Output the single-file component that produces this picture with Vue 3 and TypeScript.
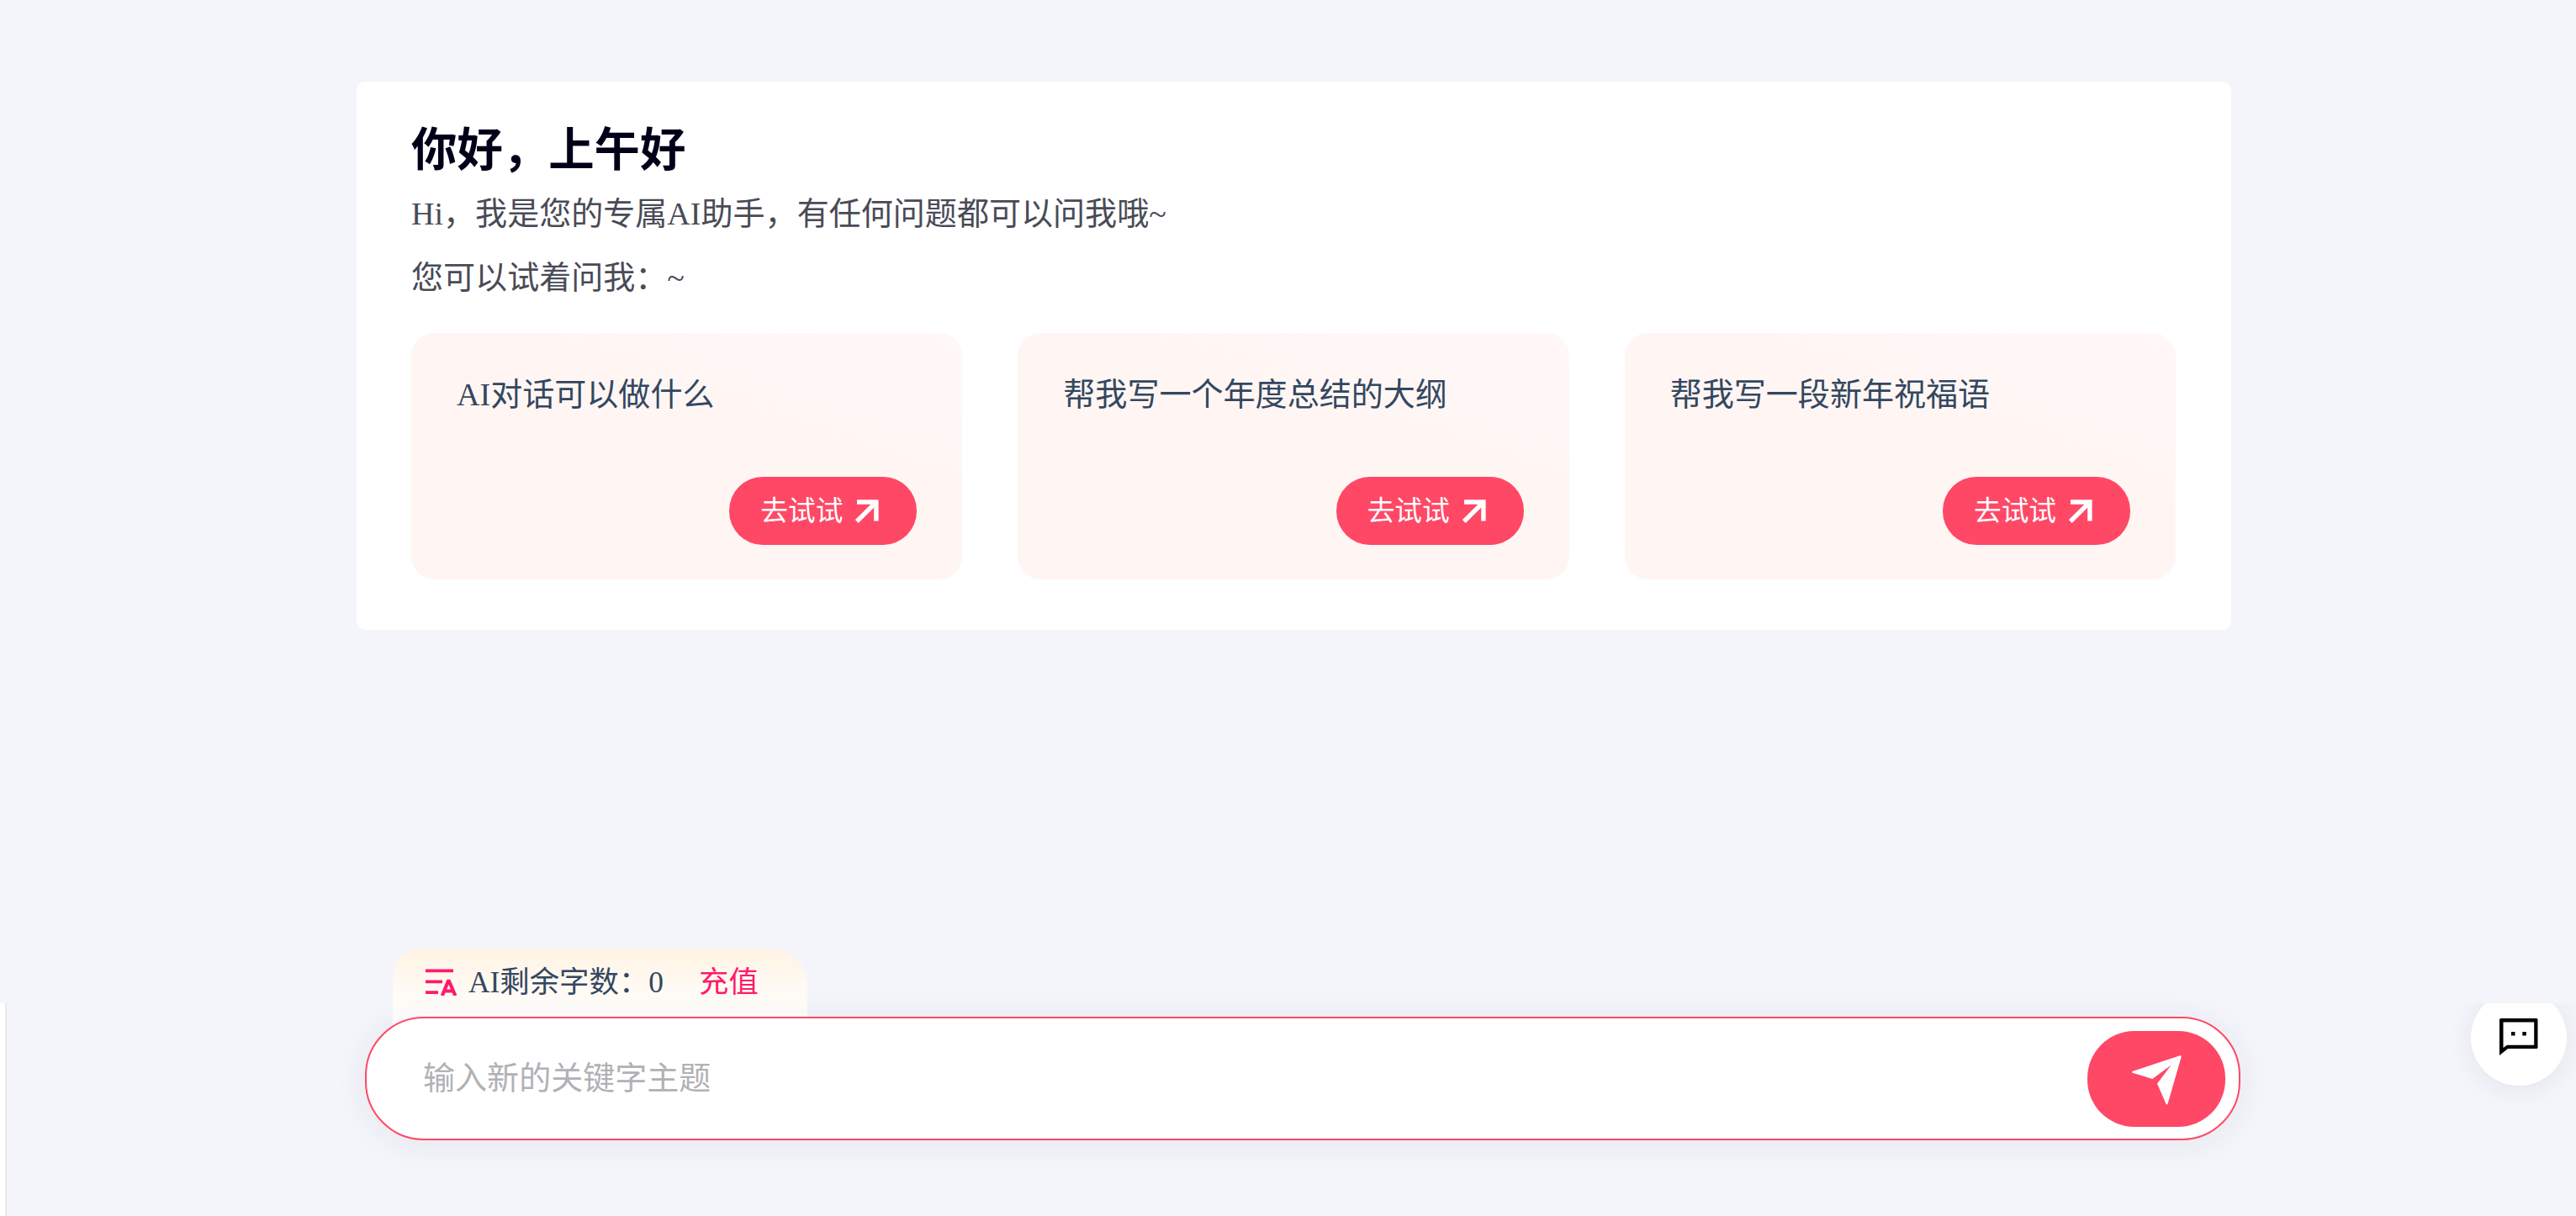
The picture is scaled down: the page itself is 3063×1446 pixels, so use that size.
<script setup lang="ts">
import { ref } from 'vue'

const keyword = ref<string>('')
const remaining = ref<number>(0)
const prompts: string[] = ['AI对话可以做什么', '帮我写一个年度总结的大纲', '帮我写一段新年祝福语']

function usePrompt(text: string): void {
  keyword.value = text
}
</script>

<template>
  <div class="page">
    <section class="welcome">
      <h1 class="title">你好，上午好</h1>
      <p class="line">Hi，我是您的专属AI助手，有任何问题都可以问我哦~</p>
      <p class="line">您可以试着问我：~</p>
      <div class="cards">
        <article v-for="text in prompts" :key="text" class="card">
          <p class="card-text">{{ text }}</p>
          <button class="try" type="button" @click="usePrompt(text)">
            <span>去试试</span>
            <svg class="arrow" viewBox="0 0 28 28">
              <path d="M2 3H24.900V25.500M24 4L1.800 26" fill="none" stroke="#fff" stroke-width="5.400" />
            </svg>
          </button>
        </article>
      </div>
    </section>

    <footer class="composer">
      <div class="quota">
        <svg class="quota-icon" viewBox="0 0 38 32">
          <g fill="none" stroke="#ff1a6c" stroke-width="3.800">
            <path d="M0 2.400H33M0 15.400H20M0 28.200H15" />
            <path d="M19.800 32L27.400 13.500L35.400 32M22.500 26.500H33" stroke-linejoin="bevel" stroke-width="4.200" />
          </g>
        </svg>
        <span class="quota-text">AI剩余字数：{{ remaining }}</span>
        <a class="recharge">充值</a>
      </div>
      <div class="input-bar">
        <input v-model="keyword" class="field" type="text" placeholder="输入新的关键字主题" />
        <button class="send" type="button" aria-label="发送">
          <svg class="plane" viewBox="0 0 59 59">
            <path
              d="M.5 19L57 .3Q59 0 58.600 2L42.500 57.800Q41.500 59.400 40.500 57.800L30 33.500L46.800 11.400L24.300 28L.7 20.700Q-.4 19.800 .5 19Z"
              fill="#fff"
            />
          </svg>
        </button>
      </div>
    </footer>

    <div class="drawer-edge"></div>
    <div class="float-area">
      <div class="chat">
        <svg class="chat-icon" viewBox="0 0 46 44">
          <path
            d="M2 0H44Q45.500 0 45.500 1.500V34.500Q45.500 36 44 36H10L0 44V1.500Q0 0 2 0ZM4.500 4.500V35L9 31.800H41.200V4.500Z"
            fill="#000"
            fill-rule="evenodd"
          />
          <path d="M14 16h4.500v4.500h-4.500zM27.300 16h4.500v4.500h-4.500z" fill="#000" />
        </svg>
      </div>
    </div>
  </div>
</template>

<style>
body {
  margin: 0;
  background: #f4f5fb;
}
</style>

<style scoped>
.page {
  position: relative;
  box-sizing: border-box;
  width: 3063px;
  height: 1446px;
  padding: 97px 399px 90px 424px;
  display: flex;
  flex-direction: column;
  justify-content: space-between;
  overflow: hidden;
  background: #f4f5fb;
  font-family: 'Liberation Serif', 'Noto Sans CJK SC', serif;
}

.welcome {
  box-sizing: border-box;
  width: 2229px;
  height: 652px;
  padding: 44px 66px 60px 65px;
  border-radius: 11px;
  background: #fff;
}

.title,
.line,
.card-text {
  margin: 0;
  white-space: nowrap;
}

.title {
  font-size: 54.4px;
  line-height: 76px;
  font-weight: 700;
  color: #000019;
}

.line {
  position: relative;
  top: -1px;
  font-size: 38.06px;
  line-height: 76px;
  color: #494b56;
}

.cards {
  display: flex;
  gap: 66px;
  margin-top: 27px;
}

.card {
  box-sizing: border-box;
  flex: 1;
  height: 293px;
  padding: 45px 54px 41px;
  display: flex;
  flex-direction: column;
  justify-content: space-between;
  border-radius: 27px;
  background: linear-gradient(200deg, #fff8f6, #fff6f4 40%);
}

.card-text {
  font-size: 38.06px;
  line-height: 57px;
  color: #34475f;
}

.try {
  align-self: flex-end;
  box-sizing: border-box;
  width: 223px;
  height: 81px;
  padding: 0 0 0 37px;
  display: flex;
  align-items: center;
  gap: 15px;
  border: 0;
  border-radius: 40px;
  background: #ff4866;
  color: #fff;
  font-family: inherit;
  font-size: 32.7px;
  line-height: 48px;
}

.arrow {
  width: 28px;
  height: 28px;
}

.composer {
  display: flex;
  flex-direction: column;
  width: 2230px;
  margin-left: 10px;
}

.quota {
  box-sizing: border-box;
  width: 493px;
  height: 114px;
  margin: 0 0 -33px 33px;
  padding: 0 0 35px 39px;
  display: flex;
  align-items: center;
  border-radius: 33px 43px 0 0;
  background: linear-gradient(180deg, #fff3e4 0, #fffdf9 65px, #fff 81px);
  font-size: 35.4px;
  line-height: 52px;
  color: #34475f;
}

.quota-icon {
  width: 38px;
  height: 32px;
  margin-right: 13px;
}

.recharge {
  margin-left: 42px;
  color: #ff1a6c;
}

.input-bar {
  position: relative;
  box-sizing: border-box;
  width: 2230px;
  height: 147px;
  padding: 0 16px 0 67px;
  display: flex;
  align-items: center;
  border: 2px solid #ff4866;
  border-radius: 70px;
  background: #fff;
  box-shadow: 0 4px 40px rgba(40, 40, 50, 0.07);
}

.field {
  flex: 1;
  min-width: 0;
  padding: 0;
  border: 0;
  outline: 0;
  background: transparent;
  font-family: inherit;
  font-size: 38.06px;
  line-height: 57px;
  color: #34475f;
}

.field::placeholder {
  color: #b1b1b6;
  opacity: 1;
}

.send {
  width: 164px;
  height: 114px;
  padding: 0;
  display: flex;
  align-items: center;
  justify-content: center;
  border: 0;
  border-radius: 56px;
  background: #ff4866;
}

.plane {
  width: 59px;
  height: 59px;
  margin-top: 4px;
}

.drawer-edge {
  position: absolute;
  left: 0;
  bottom: 0;
  width: 6px;
  height: 253px;
  border-right: 2px solid #e8e8ea;
  background: #fff;
}

.float-area {
  position: absolute;
  right: 0;
  bottom: 0;
  width: 200px;
  height: 253px;
  overflow: hidden;
}

.chat {
  width: 114px;
  height: 114px;
  margin: -16px 0 0 75px;
  display: flex;
  align-items: center;
  justify-content: center;
  border-radius: 50%;
  background: #fff;
  box-shadow: 0 4px 32px rgba(40, 40, 50, 0.08);
}

.chat-icon {
  width: 46px;
  height: 44px;
  margin-bottom: 3px;
}
</style>
